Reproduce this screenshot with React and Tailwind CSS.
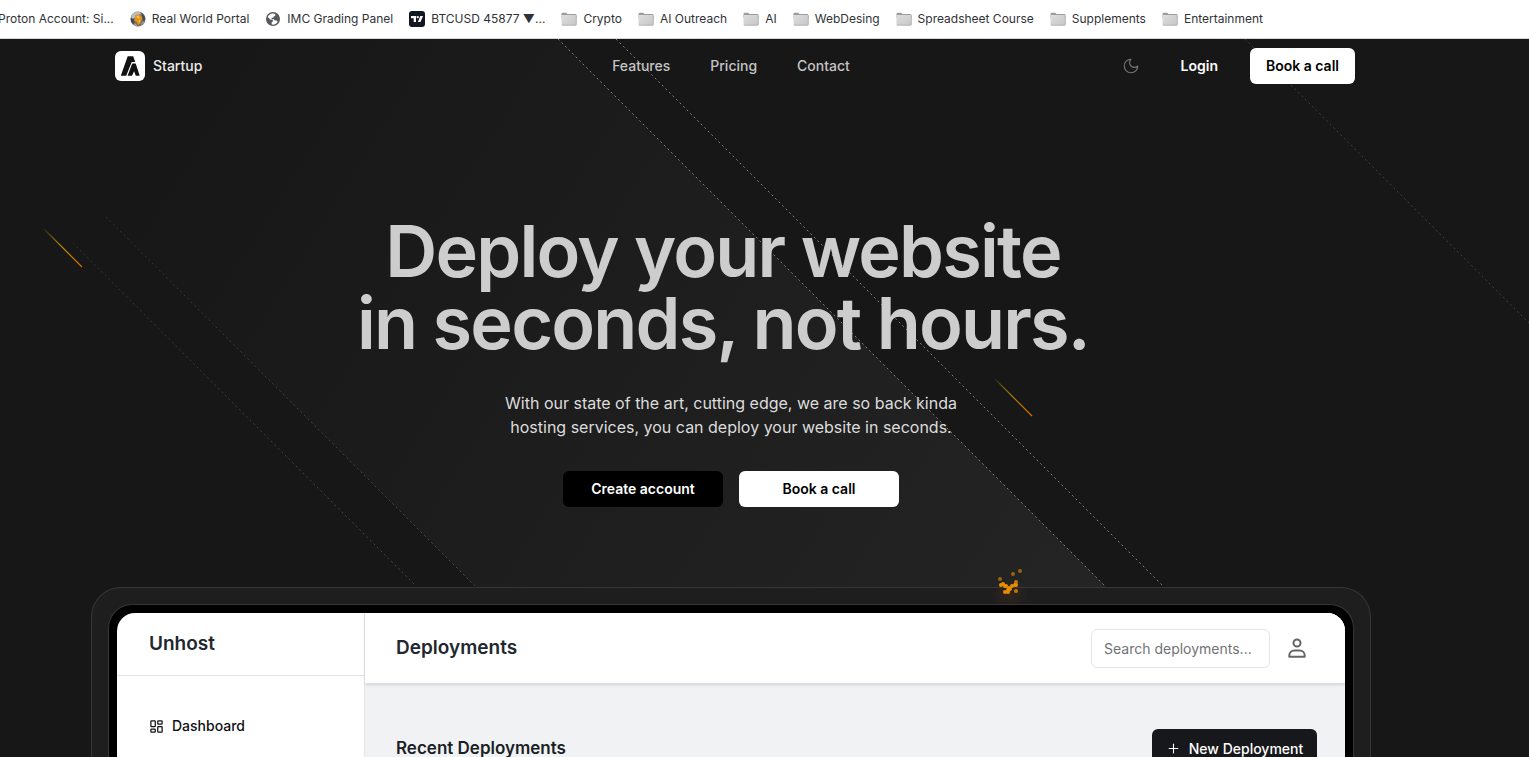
import React from "react";
import { LayoutDashboard, Plus } from "lucide-react";

function FolderIcon() {
  return (
    <svg width="16" height="14" viewBox="0 0 16 14" aria-hidden="true" className="shrink-0">
      <defs>
        <linearGradient id="folder" x1="0" y1="0" x2="1" y2="1">
          <stop offset="0" stopColor="#dedede" />
          <stop offset="1" stopColor="#c6c6c6" />
        </linearGradient>
      </defs>
      <path d="M.5 2a1.3 1.3 0 0 1 1.3-1.3h3.4l1.2 1.2h7.800a1.300 1.300 0 0 1 1.300 1.300V6H.5z" fill="#9c9c9c" />
      <path d="M.5 2.900h15v9.300a1.300 1.300 0 0 1-1.300 1.300H1.800a1.300 1.300 0 0 1-1.300-1.300z" fill="url(#folder)" />
      <path d="M1 13.200h14.200M15.300 3.500v9.300" stroke="#a8a8a8" strokeWidth=".7" />
    </svg>
  );
}

function WorldIcon() {
  return (
    <svg width="16" height="16" viewBox="0 0 16 16" aria-hidden="true" className="shrink-0">
      <circle cx="8" cy="8" r="7.600" fill="#6d7068" />
      <path d="M3 2.500C5 .8 8 .3 10 1l1 2-3 1-2 2.500L2 8C.6 6 1.600 4 3 2.500z" fill="#b6bfc4" />
      <path d="M5 4l3-.6 3 1.200 1.800 2.600L11 9.500l-.6 3L8 14 6.600 11 4 9.500 5.500 7z" fill="#e8901a" />
      <path d="M6.500 5l2-.3 1 1.800-1.500 1.300zM9 9l1.600.5L9 12z" fill="#ffd23c" />
      <path d="M1 7l2.500 1 1 3L3 13C1.400 11.500.6 9 1 7zM12 2.500l2.500 2.800L15 9l-2 .5-.8-3z" fill="#3e4a50" />
      <path d="M3.500 13l2-.6 2 2.900c-1.500 0-3-.8-4-2.300zM12 11l2.400-.4c-.6 1.500-1.800 3-3.400 3.900z" fill="#a9a49a" />
    </svg>
  );
}

function GlobeIcon() {
  return (
    <svg width="16" height="16" viewBox="-1 -1 16 16" aria-hidden="true" className="shrink-0">
      <circle cx="7" cy="7" r="7" fill="#55585c" />
      <path
        d="M6.300 1.400C4 1.700 2.300 3 1.700 5l2.900 2.800h2.200v1.600L5.500 10.500 5.800 12.600c2.400.4 4.700-.8 6-2.900L10.600 8.500H8.900L7.900 7.200H5.600V5.800h1.700l.3-1.200 1.600-.7.100-1.800c-.9-.6-2-.8-3-.7z"
        fill="#fff"
      />
    </svg>
  );
}

function TradingIcon() {
  return (
    <svg width="16" height="16" viewBox="0 0 16 16" aria-hidden="true" className="shrink-0">
      <rect width="16" height="16" rx="3" fill="#131722" />
      <path d="M2 5h5v6H4.700V7.300H2z" fill="#fff" />
      <circle cx="8.700" cy="6.100" r="1.200" fill="#fff" />
      <path d="M11.300 5H14l-2.500 6H8.900z" fill="#fff" />
    </svg>
  );
}

function LogoIcon() {
  return (
    <svg width="30" height="30" viewBox="0 0 30 30" aria-hidden="true" className="shrink-0">
      <rect width="30" height="30" rx="6" fill="#fff" />
      <path d="M12.700 5.300h5.500l2 5.700h-3.500L11.200 24.700H5.800z" fill="#111" />
      <path d="M17.200 12.600h3.500l4 12.100h-3.900l-1.700-4.400-2.100 4.400h-4.400z" fill="#111" />
    </svg>
  );
}

function MoonIcon() {
  return (
    <svg width="18" height="18" viewBox="0 0 24 24" fill="none" stroke="currentColor" strokeWidth="1.500" strokeLinejoin="round" aria-hidden="true">
      <path d="M12 3a6 6 0 0 0 9 9 9 9 0 1 1-9-9Z" />
    </svg>
  );
}

function UserIcon() {
  return (
    <svg width="22" height="22" viewBox="0 0 22 22" fill="none" stroke="currentColor" strokeWidth="2" strokeLinejoin="round" aria-hidden="true">
      <circle cx="11" cy="6" r="3.500" />
      <path d="M3.300 19.800v-1.300a5 5 0 0 1 5-5h5.400a5 5 0 0 1 5 5v1.300z" />
    </svg>
  );
}

const bookmarks = [
  { label: "Proton Account: Si..." },
  { label: "Real World Portal", Icon: WorldIcon },
  { label: "IMC Grading Panel", Icon: GlobeIcon },
  { label: "BTCUSD 45877 ▼...", Icon: TradingIcon },
  { label: "Crypto", Icon: FolderIcon },
  { label: "AI Outreach", Icon: FolderIcon },
  { label: "AI", Icon: FolderIcon },
  { label: "WebDesing", Icon: FolderIcon },
  { label: "Spreadsheet Course", Icon: FolderIcon },
  { label: "Supplements", Icon: FolderIcon },
  { label: "Entertainment", Icon: FolderIcon },
];

function BookmarksBar() {
  return (
    <nav aria-label="Bookmarks" className="flex h-[39px] shrink-0 items-center gap-4 overflow-hidden border-b border-[#d5d8d8] bg-white text-xs text-[#303236]">
      {bookmarks.map(({ label, Icon }) => (
        <a key={label} href="#" className="flex shrink-0 items-center gap-1.5 whitespace-nowrap first:-ml-0.5">
          {Icon && <Icon />}
          {label}
        </a>
      ))}
    </nav>
  );
}

function Beams() {
  return (
    <svg
      className="pointer-events-none absolute inset-0 h-full w-full"
      viewBox="0 0 1529 718"
      preserveAspectRatio="xMidYMin slice"
      fill="none"
      aria-hidden="true"
    >
      <defs>
        <linearGradient id="band" gradientUnits="userSpaceOnUse" x1="200" y1="60" x2="1060" y2="600">
          <stop offset="0" stopColor="#171717" />
          <stop offset="1" stopColor="#242424" />
        </linearGradient>
        <linearGradient id="leftBeam" gradientUnits="userSpaceOnUse" x1="80" y1="180" x2="475" y2="547">
          <stop offset="0" stopColor="#303030" />
          <stop offset="1" stopColor="#4c4c4c" />
        </linearGradient>
        <linearGradient id="spark" x1="0" y1="0" x2="1" y2="1">
          <stop offset="0" stopColor="#eab308" stopOpacity="0" />
          <stop offset=".5" stopColor="#b98a08" />
          <stop offset="1" stopColor="#d96a00" />
        </linearGradient>
      </defs>
      <path d="M0 0 H558 L1276 718 H646 L0 72z" fill="url(#band)" />
      <g strokeDasharray="2 3">
        <path d="M73 204 L416 547M106 178 L475 547" stroke="url(#leftBeam)" />
        <path d="M558 0 L1105 547M616 0 L1163 547" stroke="#808080" />
        <path d="M1245 0 L1529 284" stroke="#404040" />
      </g>
      <path d="M43 189 L82 228" stroke="url(#spark)" strokeWidth="1.200" />
      <path d="M994 339 L1032 377" stroke="url(#spark)" strokeWidth="1.200" />
    </svg>
  );
}

function Embers() {
  const dots = [
    [20, 19, 0.6], [33, 14, 0.6], [40, 11, 0.6], [21, 25, 1], [23, 24, 1], [26, 26, 1], [29, 28, 1],
    [32, 26, 1], [35, 25, 1], [36, 22, 0.8], [36, 25, 1], [28, 30, 1], [25, 32, 1], [28, 32, 1],
    [30, 29, 1], [36, 31, 0.8], [25, 26, 1],
  ];
  return (
    <svg width="60" height="50" viewBox="0 0 60 50" aria-hidden="true" className="pointer-events-none absolute -top-7 left-[888px]">
      <defs>
        <radialGradient id="glow">
          <stop offset="0" stopColor="#b45309" stopOpacity=".14" />
          <stop offset="1" stopColor="#b45309" stopOpacity="0" />
        </radialGradient>
      </defs>
      <ellipse cx="30" cy="34" rx="20" ry="14" fill="url(#glow)" />
      {dots.map(([x, y, o]) => (
        <circle key={`${x}-${y}`} cx={x} cy={y} r="2" fill="#e88d00" opacity={o} />
      ))}
    </svg>
  );
}

function Header() {
  return (
    <header className="grid grid-cols-[1fr_auto_1fr] items-center px-4 py-[9px] text-sm">
      <a href="#" className="flex items-center gap-2 pl-2 font-medium text-[#ececec]">
        <LogoIcon />
        Startup
      </a>
      <nav aria-label="Main" className="flex gap-10 font-medium text-[#c4c4c4]">
        <a href="#">Features</a>
        <a href="#">Pricing</a>
        <a href="#">Contact</a>
      </nav>
      <div className="flex items-center justify-end gap-4 font-semibold">
        <button type="button" aria-label="Toggle theme" className="flex size-9 items-center justify-center text-[#757575]">
          <MoonIcon />
        </button>
        <a href="#" className="px-4 text-white">Login</a>
        <button type="button" className="h-9 rounded-md bg-white px-4 text-black">Book a call</button>
      </div>
    </header>
  );
}

function Hero() {
  return (
    <section className="flex flex-col items-center pt-[122px] pb-20 text-center">
      <h1 className="pr-4 text-7xl leading-none font-semibold tracking-tight text-[#cdcdcd]">
        Deploy your website
        <br />
        in seconds, not hours.
      </h1>
      <p className="mt-8 text-base text-[#dcdcdc]">
        With our state of the art, cutting edge, we are so back kinda
        <br />
        hosting services, you can deploy your website in seconds.
      </p>
      <div className="mt-8 flex gap-4 text-sm font-semibold">
        <button type="button" className="h-9 w-40 rounded-md bg-black text-white">Create account</button>
        <button type="button" className="h-9 w-40 rounded-md bg-white text-black">Book a call</button>
      </div>
    </section>
  );
}

function DashboardPreview() {
  return (
    <div className="relative rounded-t-[30px] border border-b-0 border-[#363636] bg-[#1e1e1e] p-4 pb-0">
      <Embers />
      <div className="rounded-t-3xl border border-b-0 border-[#363636] bg-black p-2 pb-0">
        <div className="flex h-[420px] overflow-hidden rounded-t-[18px] bg-white text-[#22262e]">
          <aside className="w-[248px] shrink-0 border-r border-[#e4e5e7]">
            <div className="flex h-[63px] items-center border-b border-[#e4e5e7] px-8 text-[19px] font-semibold">Unhost</div>
            <nav aria-label="Dashboard" className="flex flex-col gap-4 px-8 py-10 text-sm font-medium text-[#101114]">
              <a href="#" className="flex items-center gap-2">
                <LayoutDashboard size={15} strokeWidth={2} />
                Dashboard
              </a>
            </nav>
          </aside>
          <section className="flex grow flex-col bg-[#f0f2f4]">
            <div className="flex h-[71px] items-center justify-between border-b border-[#dcdddf] bg-white px-[31px] shadow-sm">
              <h2 className="text-[19px] font-semibold">Deployments</h2>
              <div className="flex items-center gap-2.5">
                <input
                  type="text"
                  aria-label="Search deployments"
                  placeholder="Search deployments..."
                  className="h-[39px] w-[179px] rounded-md border border-[#e4e5e7] bg-white px-3 text-sm placeholder:text-[#717275]"
                />
                <button type="button" aria-label="Account" className="px-1.5 text-[#666]">
                  <UserIcon />
                </button>
              </div>
            </div>
            <div className="flex items-center justify-between pt-[45px] pr-7 pl-[31px]">
              <h3 className="text-[17px] font-semibold text-[#1b1e25]">Recent Deployments</h3>
              <button type="button" className="flex h-[39px] w-[165px] items-center justify-center gap-2 rounded-md bg-[#17181b] text-sm font-medium text-white">
                <Plus size={15} strokeWidth={1.7} />
                New Deployment
              </button>
            </div>
          </section>
        </div>
      </div>
    </div>
  );
}

export default function App() {
  return (
    <div className="flex h-screen flex-col overflow-hidden bg-[#171717] font-['Inter','Liberation_Sans',sans-serif]">
      <BookmarksBar />
      <main className="relative min-h-0 grow overflow-hidden pr-[67px]">
        <Beams />
        <div className="relative mx-auto max-w-7xl">
          <Header />
          <Hero />
          <DashboardPreview />
        </div>
      </main>
    </div>
  );
}
